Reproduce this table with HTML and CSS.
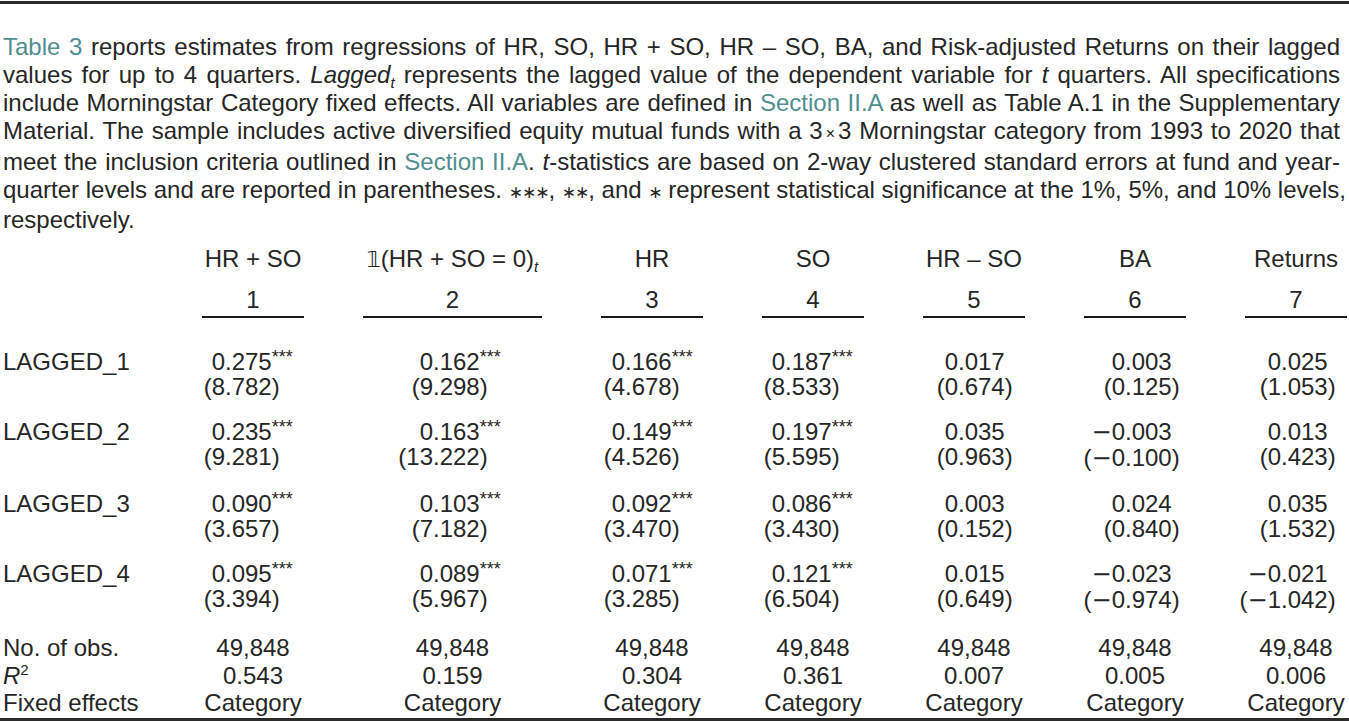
FILE: index.html
```html
<!DOCTYPE html>
<html lang="en">
<head>
<meta charset="utf-8">
<title>Table 3</title>
<link rel="stylesheet" href="styles.css">
</head>
<body>
<div class="page">
  <div class="rule"></div>
  <div class="note">
    <span class="ln"><span class="ref">Table 3</span> reports estimates from regressions of HR, SO, HR + SO, HR – SO, BA, and Risk-adjusted Returns on their lagged</span>
    <span class="ln">values for up to 4 quarters. <i>Lagged<span class="sub">t</span></i> represents the lagged value of the dependent variable for <i>t</i> quarters. All specifications</span>
    <span class="ln">include Morningstar Category fixed effects. All variables are defined in <span class="ref">Section II.A</span> as well as Table A.1 in the Supplementary</span>
    <span class="ln">Material. The sample includes active diversified equity mutual funds with a 3<span class="times">×</span>3 Morningstar category from 1993 to 2020 that</span>
    <span class="ln">meet the inclusion criteria outlined in <span class="ref">Section II.A</span>. <i>t</i>-statistics are based on 2-way clustered standard errors at fund and year-</span>
    <span class="ln">quarter levels and are reported in parentheses. <span class="ast">∗∗∗</span>, <span class="ast">∗∗</span>, and <span class="ast">∗</span> represent statistical significance at the 1%, 5%, and 10% levels,</span>
    <span class="ln last">respectively.</span>
  </div>

  <div class="row head">
    <div></div>
    <div class="ctr">HR + SO</div>
    <div class="ctr"><span class="ind">𝟙</span>(HR + SO = 0)<span class="sub">t</span></div>
    <div class="ctr">HR</div>
    <div class="ctr">SO</div>
    <div class="ctr">HR – SO</div>
    <div class="ctr">BA</div>
    <div class="ctr">Returns</div>
  </div>
  <div class="row nums">
    <div></div>
    <div class="ctr ul">1</div>
    <div class="ctr ul">2</div>
    <div class="ctr ul">3</div>
    <div class="ctr ul">4</div>
    <div class="ctr ul">5</div>
    <div class="ctr ul">6</div>
    <div class="ctr ul">7</div>
  </div>

  <div class="rows">
    <div class="row data">
      <div class="lab">LAGGED_1</div>
      <div class="num c1"><div><span class="i">0</span>.275<span class="st">***</span></div><div><span class="i">(8</span>.782)</div></div>
      <div class="num c2"><div><span class="i">0</span>.162<span class="st">***</span></div><div><span class="i">(9</span>.298)</div></div>
      <div class="num c3"><div><span class="i">0</span>.166<span class="st">***</span></div><div><span class="i">(4</span>.678)</div></div>
      <div class="num c4"><div><span class="i">0</span>.187<span class="st">***</span></div><div><span class="i">(8</span>.533)</div></div>
      <div class="num c5"><div><span class="i">0</span>.017</div><div><span class="i">(0</span>.674)</div></div>
      <div class="num c6"><div><span class="i">0</span>.003</div><div><span class="i">(0</span>.125)</div></div>
      <div class="num c7"><div><span class="i">0</span>.025</div><div><span class="i">(1</span>.053)</div></div>
    </div>
    <div class="row data">
      <div class="lab">LAGGED_2</div>
      <div class="num c1"><div><span class="i">0</span>.235<span class="st">***</span></div><div><span class="i">(9</span>.281)</div></div>
      <div class="num c2"><div><span class="i">0</span>.163<span class="st">***</span></div><div><span class="i">(13</span>.222)</div></div>
      <div class="num c3"><div><span class="i">0</span>.149<span class="st">***</span></div><div><span class="i">(4</span>.526)</div></div>
      <div class="num c4"><div><span class="i">0</span>.197<span class="st">***</span></div><div><span class="i">(5</span>.595)</div></div>
      <div class="num c5"><div><span class="i">0</span>.035</div><div><span class="i">(0</span>.963)</div></div>
      <div class="num c6"><div><span class="i"><span class="m">−</span>0</span>.003</div><div><span class="i">(<span class="m">−</span>0</span>.100)</div></div>
      <div class="num c7"><div><span class="i">0</span>.013</div><div><span class="i">(0</span>.423)</div></div>
    </div>
    <div class="row data">
      <div class="lab">LAGGED_3</div>
      <div class="num c1"><div><span class="i">0</span>.090<span class="st">***</span></div><div><span class="i">(3</span>.657)</div></div>
      <div class="num c2"><div><span class="i">0</span>.103<span class="st">***</span></div><div><span class="i">(7</span>.182)</div></div>
      <div class="num c3"><div><span class="i">0</span>.092<span class="st">***</span></div><div><span class="i">(3</span>.470)</div></div>
      <div class="num c4"><div><span class="i">0</span>.086<span class="st">***</span></div><div><span class="i">(3</span>.430)</div></div>
      <div class="num c5"><div><span class="i">0</span>.003</div><div><span class="i">(0</span>.152)</div></div>
      <div class="num c6"><div><span class="i">0</span>.024</div><div><span class="i">(0</span>.840)</div></div>
      <div class="num c7"><div><span class="i">0</span>.035</div><div><span class="i">(1</span>.532)</div></div>
    </div>
    <div class="row data">
      <div class="lab">LAGGED_4</div>
      <div class="num c1"><div><span class="i">0</span>.095<span class="st">***</span></div><div><span class="i">(3</span>.394)</div></div>
      <div class="num c2"><div><span class="i">0</span>.089<span class="st">***</span></div><div><span class="i">(5</span>.967)</div></div>
      <div class="num c3"><div><span class="i">0</span>.071<span class="st">***</span></div><div><span class="i">(3</span>.285)</div></div>
      <div class="num c4"><div><span class="i">0</span>.121<span class="st">***</span></div><div><span class="i">(6</span>.504)</div></div>
      <div class="num c5"><div><span class="i">0</span>.015</div><div><span class="i">(0</span>.649)</div></div>
      <div class="num c6"><div><span class="i"><span class="m">−</span>0</span>.023</div><div><span class="i">(<span class="m">−</span>0</span>.974)</div></div>
      <div class="num c7"><div><span class="i"><span class="m">−</span>0</span>.021</div><div><span class="i">(<span class="m">−</span>1</span>.042)</div></div>
    </div>
  </div>

  <div class="stats">
    <div class="row stat">
      <div class="lab">No. of obs.</div>
      <div class="ctr">49,848</div><div class="ctr">49,848</div><div class="ctr">49,848</div><div class="ctr">49,848</div><div class="ctr">49,848</div><div class="ctr">49,848</div><div class="ctr">49,848</div>
    </div>
    <div class="row stat">
      <div class="lab"><i>R</i><span class="sup">2</span></div>
      <div class="ctr">0.543</div><div class="ctr">0.159</div><div class="ctr">0.304</div><div class="ctr">0.361</div><div class="ctr">0.007</div><div class="ctr">0.005</div><div class="ctr">0.006</div>
    </div>
    <div class="row stat">
      <div class="lab">Fixed effects</div>
      <div class="ctr">Category</div><div class="ctr">Category</div><div class="ctr">Category</div><div class="ctr">Category</div><div class="ctr">Category</div><div class="ctr">Category</div><div class="ctr">Category</div>
    </div>
  </div>
  <div class="rule bottom"></div>
</div>
</body>
</html>
```

FILE: styles.css
```css
html, body {
  margin: 0;
  padding: 0;
  background: #ffffff;
}

.page {
  width: 1349px;
  font-family: "Liberation Sans", Arial, sans-serif;
  font-size: 24px;
  color: #262626;
}

.rule {
  height: 3px;
  margin-top: 1px;
  background: #2a2a2a;
}

.rule.bottom {
  margin-top: 1px;
}

.note {
  margin: 29px 9px 0 3px;
  line-height: 28px;
}

.ln {
  display: block;
  white-space: nowrap;
  text-align: justify;
  text-align-last: justify;
}

.ln.last {
  text-align-last: left;
}

.ref {
  color: #4f8f8f;
}

i {
  font-style: italic;
}

.sub {
  font-size: 15px;
  line-height: 0;
  vertical-align: -5px;
  font-style: italic;
}

.sup {
  font-size: 15px;
  line-height: 0;
  vertical-align: 9px;
}

.times {
  font-size: 16px;
  padding: 0 3px;
}

.ast {
  font-family: "DejaVu Sans", sans-serif;
  font-size: 17px;
  letter-spacing: -1px;
}

.ind {
  font-family: "DejaVu Sans", sans-serif;
  font-size: 22px;
}

.row {
  display: grid;
  grid-template-columns: 140px 102px 179px repeat(5, 102px);
  column-gap: 59px;
  margin-left: 3px;
  line-height: 25px;
}

.ctr {
  text-align: center;
  white-space: nowrap;
}

.head {
  margin-top: 12px;
}

.nums {
  padding-top: 15px;
}

.ul {
  padding-bottom: 4px;
  border-bottom: 2px solid #1a1a1a;
}

.rows {
  padding-top: 11px;
}

.data {
  padding-top: 20px;
}

.lab {
  white-space: nowrap;
}

.num {
  margin-left: -24px;
  white-space: nowrap;
}

.num .i {
  display: inline-block;
  text-align: right;
}

.c1 .i { width: 47px; }
.c2 .i { width: 94px; }
.c3 .i { width: 48px; }
.c4 .i { width: 47px; }
.c5 .i { width: 59px; }
.c6 .i { width: 65px; }
.c7 .i { width: 60px; }

.m {
  font-family: "DejaVu Sans", sans-serif;
}

.st {
  font-size: 18px;
  line-height: 0;
  vertical-align: 7px;
  letter-spacing: 0;
}

.stats {
  padding-top: 21px;
}

.stat {
  line-height: 27.5px;
}
```
